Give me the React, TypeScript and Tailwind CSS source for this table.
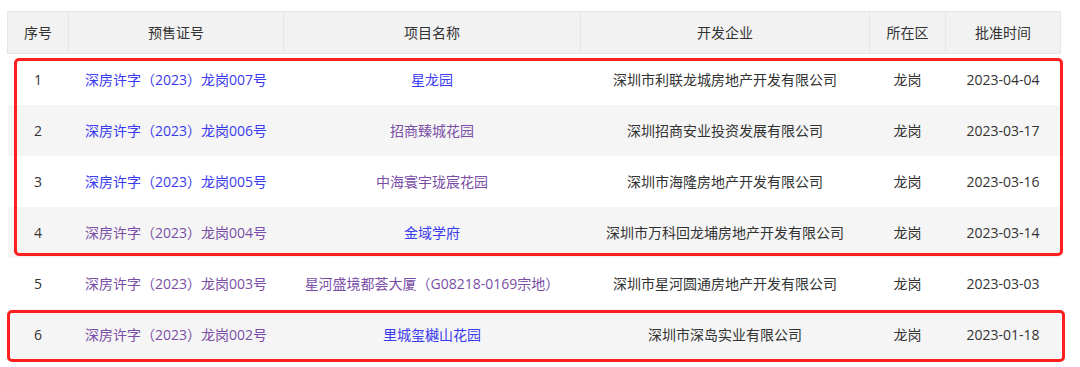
const BLUE = "text-[#3a3af0]";
const PURPLE = "text-[#7a4ea6]";

const rows = [
  { no: "1", cert: "深房许字（2023）龙岗007号", certColor: BLUE, name: "星龙园", nameColor: BLUE, company: "深圳市利联龙城房地产开发有限公司", date: "2023-04-04" },
  { no: "2", cert: "深房许字（2023）龙岗006号", certColor: BLUE, name: "招商臻城花园", nameColor: PURPLE, company: "深圳招商安业投资发展有限公司", date: "2023-03-17" },
  { no: "3", cert: "深房许字（2023）龙岗005号", certColor: BLUE, name: "中海寰宇珑宸花园", nameColor: PURPLE, company: "深圳市海隆房地产开发有限公司", date: "2023-03-16" },
  { no: "4", cert: "深房许字（2023）龙岗004号", certColor: PURPLE, name: "金域学府", nameColor: BLUE, company: "深圳市万科回龙埔房地产开发有限公司", date: "2023-03-14" },
  { no: "5", cert: "深房许字（2023）龙岗003号", certColor: PURPLE, name: "星河盛境都荟大厦（G08218-0169宗地）", nameColor: PURPLE, company: "深圳市星河圆通房地产开发有限公司", date: "2023-03-03" },
  { no: "6", cert: "深房许字（2023）龙岗002号", certColor: PURPLE, name: "里城玺樾山花园", nameColor: BLUE, company: "深圳市深岛实业有限公司", date: "2023-01-18" },
];

const headers = ["序号", "预售证号", "项目名称", "开发企业", "所在区", "批准时间"];
const widths = ["w-[61px]", "w-[215px]", "w-[297px]", "w-[289px]", "w-[76px]", "w-[115px]"];

export default function App() {
  return (
    <div
      className="relative w-[1080px] h-[367px] bg-white overflow-hidden pt-[11px] pl-[7px]"
      style={{ fontFamily: '"Open Sans", "Noto Sans CJK SC", sans-serif' }}
    >
      <table className="w-[1053px] table-fixed border-collapse text-[14px] text-[#333]">
        <thead>
          <tr className="h-[42px] bg-[#f2f2f2]">
            {headers.map((h, i) => (
              <th key={h} className={`${widths[i]} border border-[#e6e6e6] font-normal text-center`}>
                {h}
              </th>
            ))}
          </tr>
        </thead>
        <tbody>
          {rows.map((r, i) => (
            <tr key={r.no} className={`h-[51px] ${i % 2 === 1 ? "bg-[#f5f5f5]" : "bg-white"}`}>
              <td className="text-center">{r.no}</td>
              <td className={`text-center ${r.certColor}`}>{r.cert}</td>
              <td className={`text-center ${r.nameColor}`}>{r.name}</td>
              <td className="text-center">{r.company}</td>
              <td className="text-center">龙岗</td>
              <td className="text-center">{r.date}</td>
            </tr>
          ))}
        </tbody>
      </table>

      {/* red highlight boxes */}
      <div className="absolute left-[14px] top-[58px] w-[1049px] h-[198px] border-[3px] border-[#ff1f1f] rounded-[5px]" />
      <div className="absolute left-[7px] top-[310px] w-[1058px] h-[52px] border-[3px] border-[#ff1f1f] rounded-[5px]" />
    </div>
  );
}
